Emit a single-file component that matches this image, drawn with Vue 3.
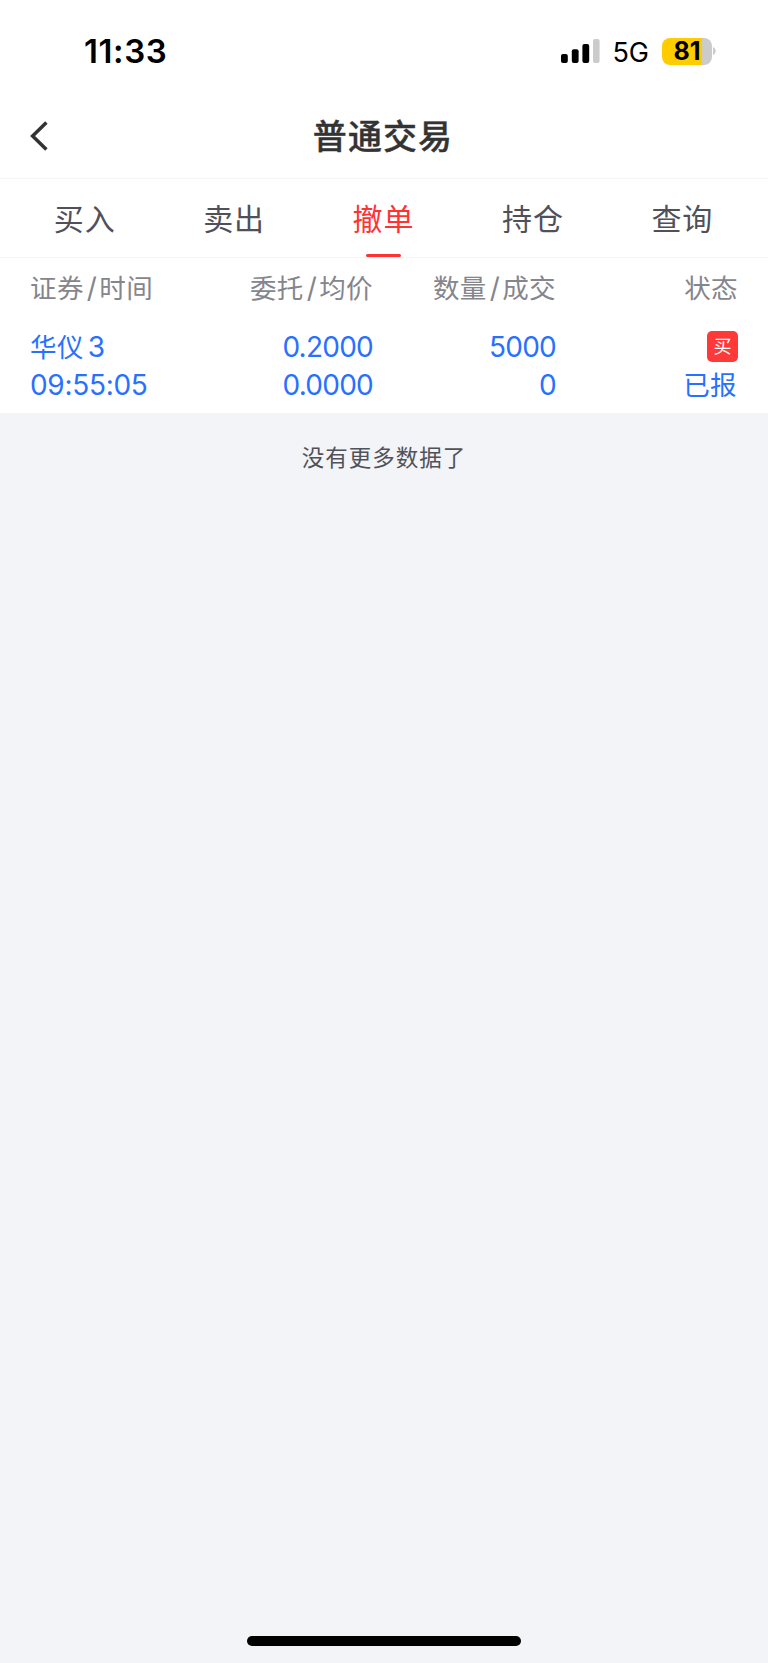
<template>
  <div class="page">
    <div class="status-bar">
      <span class="clock">11:33</span>
      <div class="status-icons">
        <svg class="signal" width="39" height="24" viewBox="0 0 39 24">
          <rect x="0" y="15" width="6.8" height="9" rx="2" />
          <rect x="10.8" y="10.2" width="6.8" height="13.8" rx="2" />
          <rect x="21.4" y="5" width="6.8" height="19" rx="2" />
          <rect x="32" y="0" width="6.6" height="24" rx="2" fill="#cbcbcb" />
        </svg>
        <span class="network">5G</span>
        <div class="battery">
          <div class="battery-body">81</div>
          <svg width="3" height="8" viewBox="0 0 3 8">
            <path d="M0 0C3.6 1.2 3.6 6.8 0 8Z" fill="#cbcbcb" />
          </svg>
        </div>
      </div>
    </div>

    <header class="nav-bar">
      <button class="back" aria-label="返回">
        <svg width="20" height="32" viewBox="0 0 20 32">
          <path d="M17.4 2.4L3.6 16L17.4 29.6" fill="none" stroke="#333" stroke-width="3.5" />
        </svg>
      </button>
      <h1 class="title">普通交易</h1>
    </header>

    <nav class="tabs">
      <button
        v-for="tab in tabs"
        :key="tab"
        class="tab"
        :class="{ active: activeTab === tab }"
        @click="activeTab = tab"
      >
        {{ tab }}
      </button>
    </nav>

    <section class="orders">
      <div class="order-row order-head">
        <span v-for="col in columns" :key="col[0]" class="cell">
          {{ col[0] }}<template v-if="col[1]"><i class="slash">/</i>{{ col[1] }}</template>
        </span>
      </div>
      <div v-for="order in orders" :key="order.time" class="order">
        <div class="order-row">
          <span class="cell">{{ order.name }}<span class="name-suffix">{{ order.suffix }}</span></span>
          <span class="cell num">{{ order.price }}</span>
          <span class="cell num">{{ order.amount }}</span>
          <span class="cell side"><span class="badge">{{ order.side }}</span></span>
        </div>
        <div class="order-row">
          <span class="cell time">{{ order.time }}</span>
          <span class="cell num">{{ order.avgPrice }}</span>
          <span class="cell num">{{ order.filled }}</span>
          <span class="cell status">{{ order.status }}</span>
        </div>
      </div>
    </section>

    <p class="no-more">没有更多数据了</p>
    <div class="home-indicator"></div>
  </div>
</template>

<script setup>
import { ref } from 'vue'

const tabs = ['买入', '卖出', '撤单', '持仓', '查询']
const activeTab = ref('撤单')

const columns = [
  ['证券', '时间'],
  ['委托', '均价'],
  ['数量', '成交'],
  ['状态']
]

const orders = [
  {
    name: '华仪',
    suffix: '3',
    time: '09:55:05',
    price: '0.2000',
    avgPrice: '0.0000',
    amount: '5000',
    filled: '0',
    side: '买',
    status: '已报'
  }
]
</script>

<style>
body {
  margin: 0;
  background-color: #f3f4f8;
}
</style>

<style scoped>
.page {
  display: flex;
  flex-direction: column;
  height: 1663px;
  background-color: #f3f4f8;
  font-family: Inter, "Noto Sans CJK SC", sans-serif;
  color: #333333;
}

button {
  padding: 0;
  border: none;
  background: none;
  font-family: inherit;
  cursor: pointer;
}

.status-bar {
  display: flex;
  justify-content: space-between;
  align-items: center;
  box-sizing: border-box;
  height: 93px;
  padding: 9px 52px 0 84px;
  background-color: #ffffff;
  color: #000000;
}

.clock {
  font-size: 33px;
  font-weight: 600;
  line-height: 40px;
  letter-spacing: 0.6px;
}

.status-icons {
  display: flex;
  align-items: center;
}

.network {
  margin: 3px 13px 0 12px;
  font-size: 27px;
  line-height: 32px;
}

.battery {
  display: flex;
  align-items: center;
  gap: 1px;
}

.battery-body {
  width: 50px;
  height: 27px;
  border-radius: 8px;
  background: linear-gradient(to right, #ffcc00 40px, #cbcbcb 40px);
  font-size: 25px;
  font-weight: 700;
  line-height: 27px;
  text-align: center;
}

.nav-bar {
  display: grid;
  grid-template-columns: 60px 1fr 60px;
  align-items: center;
  height: 85px;
  border-bottom: 1.5px solid #f6f6f8;
  background-color: #ffffff;
}

.back {
  display: flex;
  padding-left: 28.5px;
}

.title {
  margin: 2px 2px 0 0;
  font-size: 34px;
  font-weight: 500;
  line-height: 48px;
  letter-spacing: 1.1px;
  text-align: center;
  -webkit-text-stroke: 0.4px #333333;
}

.tabs {
  display: flex;
  box-sizing: border-box;
  height: 79px;
  padding: 0 11px 0 10px;
  border-bottom: 1px solid #f5f5f7;
  background-color: #ffffff;
}

.tab {
  display: flex;
  flex: 1;
  flex-direction: column;
  align-items: center;
  padding-top: 18px;
  color: #50505a;
  font-size: 30px;
  line-height: 44px;
  letter-spacing: 0.9px;
}

.tab.active {
  color: #ff3333;
}

.tab.active::after {
  content: '';
  width: 35px;
  height: 4px;
  margin-top: 13px;
  border-radius: 2px;
  background-color: #ff3333;
}

.orders {
  padding: 0 30px;
  background-color: #ffffff;
  font-size: 26.5px;
  letter-spacing: 0.4px;
}

.order-row {
  display: grid;
  grid-template-columns: 150px 193px 183px 1fr;
  height: 37.5px;
  line-height: 37.5px;
}

.order-head {
  height: 71px;
  color: #85858d;
  line-height: 61px;
}

.cell {
  text-align: right;
  white-space: nowrap;
}

.cell:first-child {
  text-align: left;
}

.slash {
  margin: 0 2px 0 3px;
  font-size: 28px;
  font-style: normal;
}

.order {
  height: 84px;
  color: #2871ff;
}

.num {
  font-size: 28px;
  letter-spacing: -0.75px;
}

.time {
  font-size: 28px;
  letter-spacing: -0.3px;
}

.name-suffix {
  margin-left: 4px;
  font-size: 28px;
}

.side {
  display: flex;
  justify-content: flex-end;
}

.status {
  padding-right: 1px;
}

.badge {
  width: 31px;
  height: 31px;
  margin-top: 2px;
  border-radius: 5px;
  background-color: #ff3838;
  color: #ffffff;
  font-size: 18px;
  line-height: 31px;
  letter-spacing: 0;
  text-align: center;
}

.no-more {
  margin: 28px 0 0;
  color: #50525a;
  font-size: 22.5px;
  line-height: 34px;
  letter-spacing: 1px;
  text-align: center;
}

.home-indicator {
  width: 274px;
  height: 10px;
  margin: auto auto 17px;
  border-radius: 5px;
  background-color: #000000;
}
</style>
